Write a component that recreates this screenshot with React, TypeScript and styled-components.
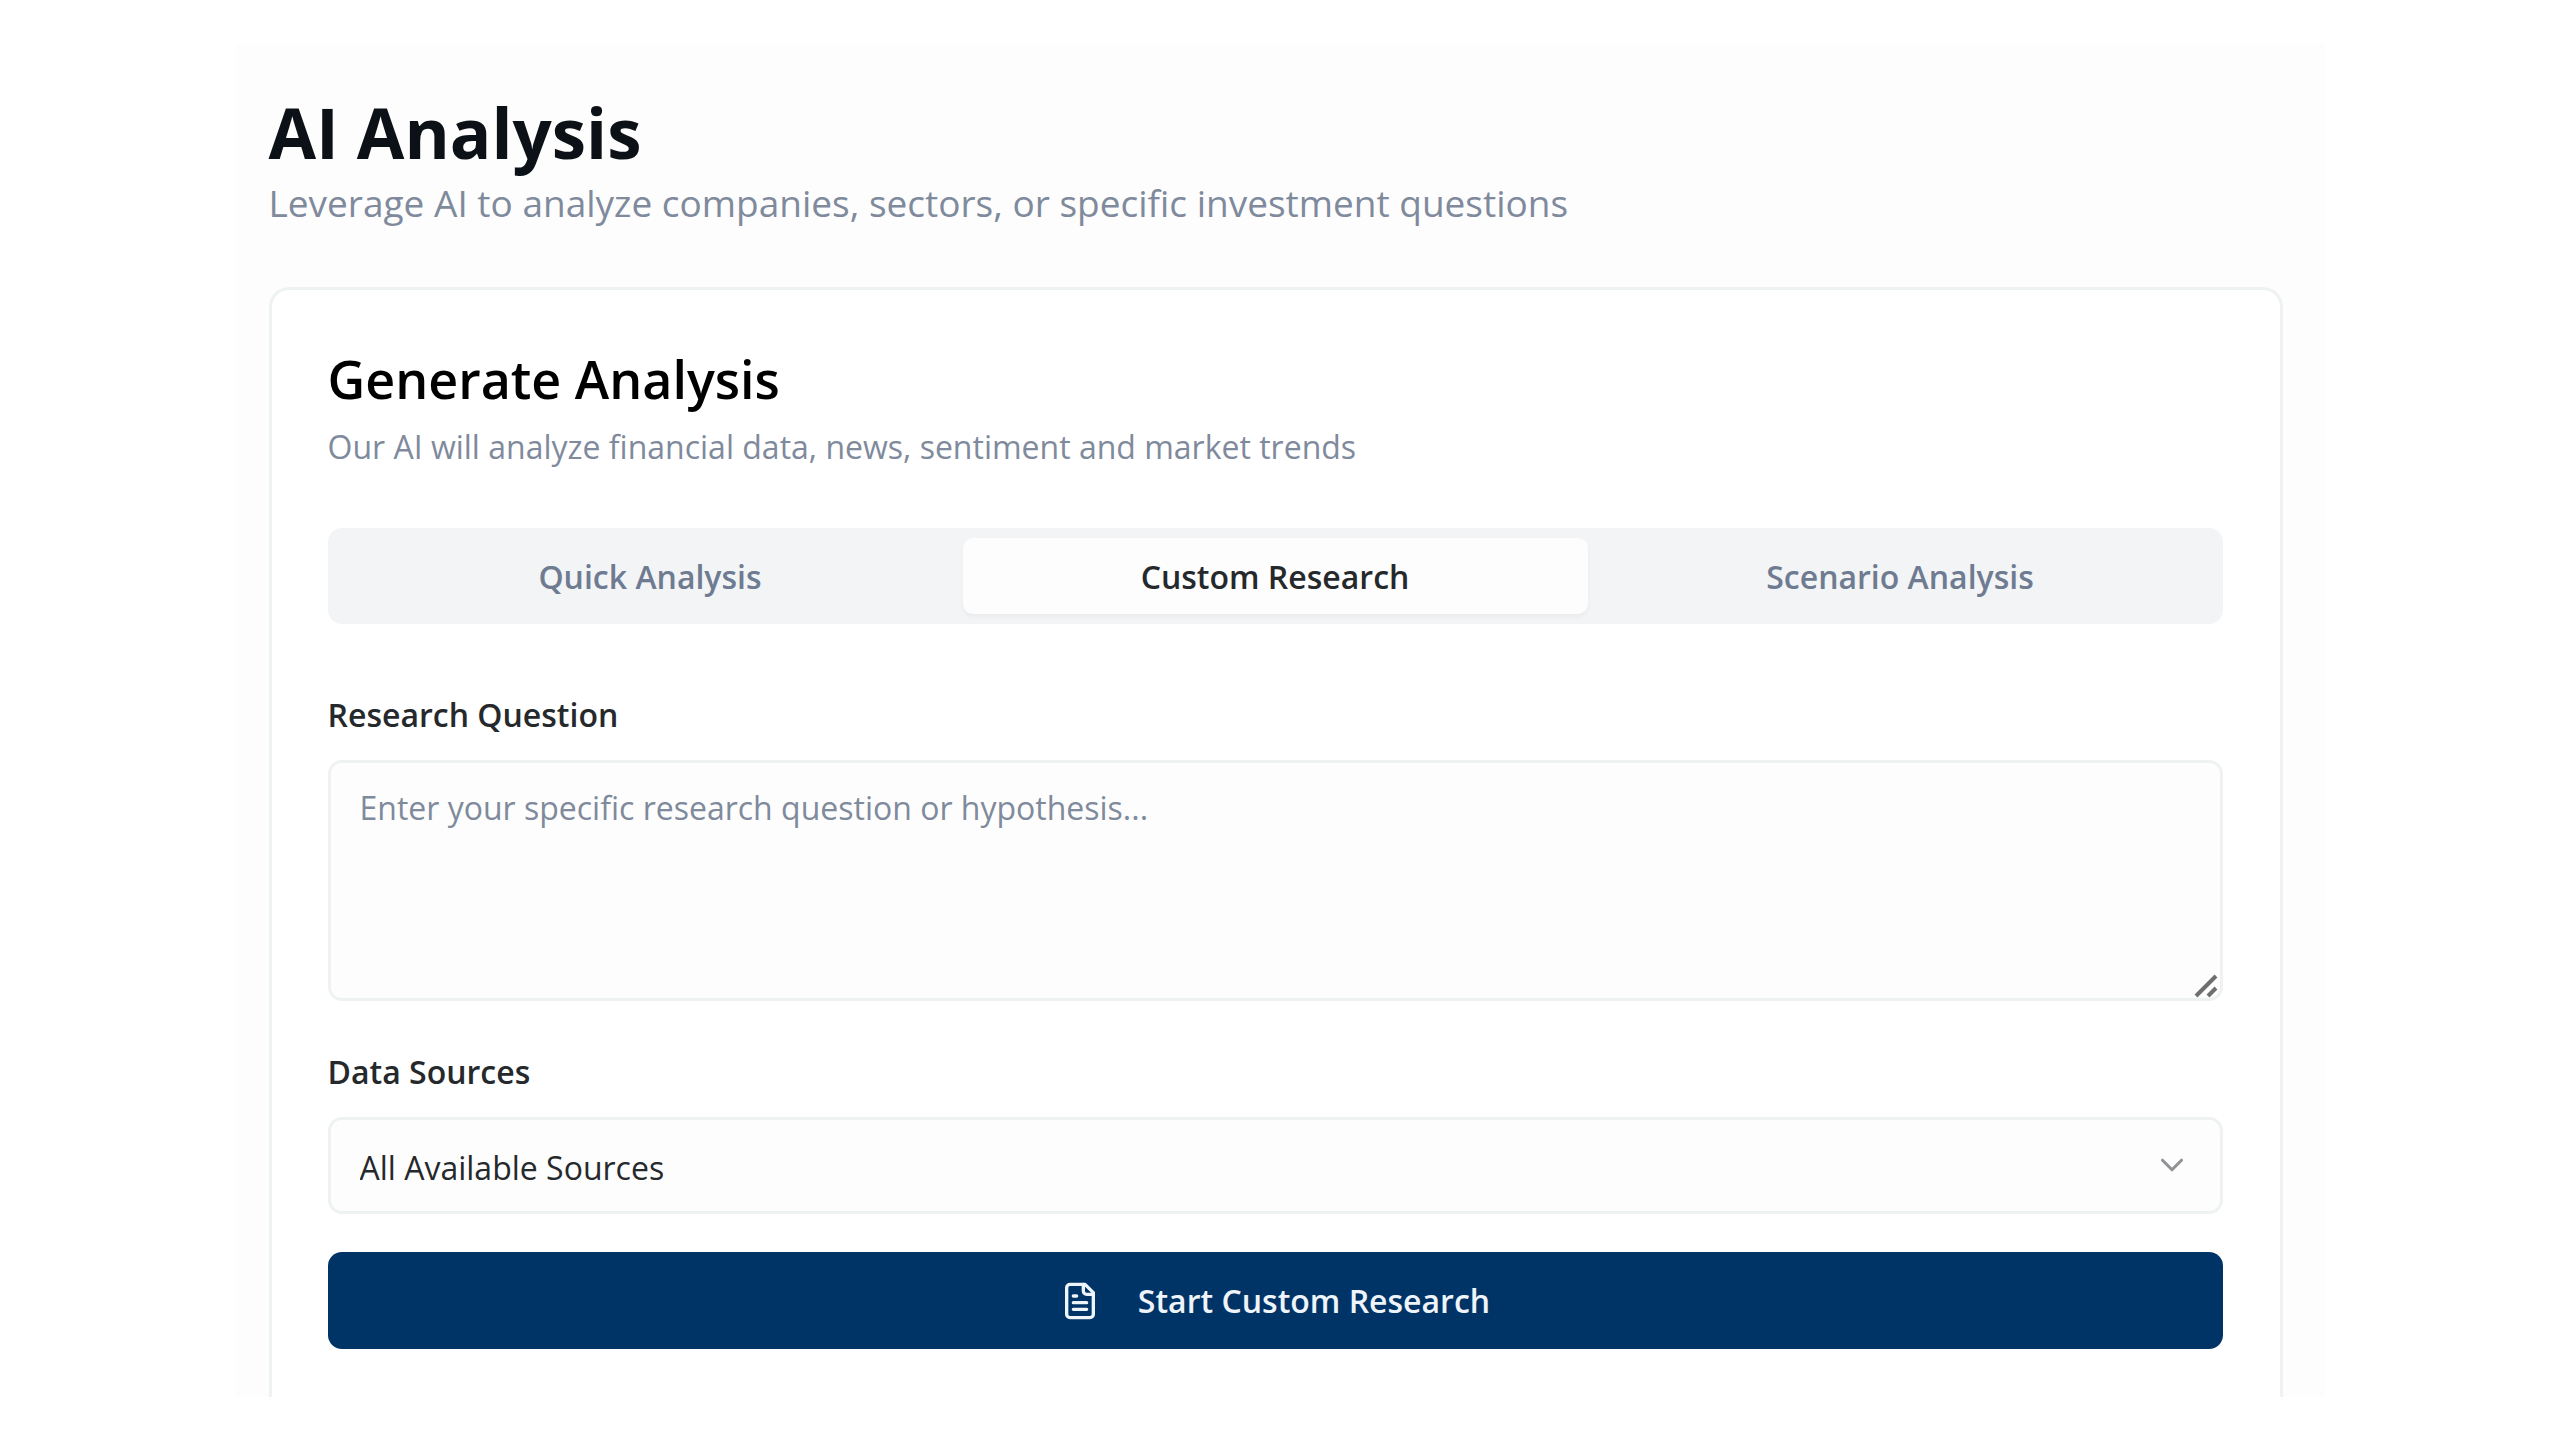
import React, { useState } from "react";
import styled, { createGlobalStyle } from "styled-components";

const color = {
  page: "#ffffff",
  panel: "#fdfdfd",
  card: "#ffffff",
  line: "#eef2f3",
  muted: "#f2f4f6",
  ink: "#0b1116",
  text: "#26292c",
  soft: "#7f8a9c",
  tab: "#6e7b91",
  navy: "#003366",
};

const GlobalStyle = createGlobalStyle`
  *, *::before, *::after { box-sizing: border-box; }
  body {
    margin: 0;
    background: ${color.page};
    color: ${color.ink};
    font-family: "Open Sans", "Noto Sans", sans-serif;
  }
  h1, h2, p { margin: 0; }
  button, select, textarea { font: inherit; }
`;

const Page = styled.div`
  padding: 44px 32px;
`;

const Panel = styled.main`
  max-width: 2089px;
  margin: 0 auto;
  padding: 46px 42px 0 33px;
  background: ${color.panel};
`;

const PageTitle = styled.h1`
  font-size: 69px;
  line-height: 84px;
  font-weight: 700;
`;

const PageIntro = styled.p`
  font-size: 37px;
  line-height: 58px;
  color: ${color.soft};
`;

const Card = styled.section`
  margin-top: 55px;
  padding: 60px 57px 48px 56px;
  border: 3px solid ${color.line};
  border-bottom: 0;
  border-radius: 20px 20px 0 0;
  background: ${color.card};
`;

const CardTitle = styled.h2`
  font-size: 52px;
  line-height: 58px;
  font-weight: 600;
  color: #000000;
`;

const CardIntro = styled.p`
  margin-top: 15px;
  font-size: 32px;
  line-height: 48px;
  color: ${color.soft};
`;

const TabList = styled.div`
  display: grid;
  grid-template-columns: repeat(3, 1fr);
  height: 96px;
  margin-top: 57px;
  padding: 10px;
  border-radius: 14px;
  background: ${color.muted};
`;

const Tab = styled.button<{ $active: boolean }>`
  border: 0;
  border-radius: 10px;
  padding: 2px 0 0;
  font-size: 32px;
  line-height: 48px;
  font-weight: 600;
  cursor: pointer;
  color: ${(p) => (p.$active ? color.text : color.tab)};
  background: ${(p) => (p.$active ? color.panel : "transparent")};
  box-shadow: ${(p) => (p.$active ? "0 3px 5px rgba(0, 0, 0, 0.04)" : "none")};
`;

const Form = styled.form`
  display: flex;
  flex-direction: column;
  margin-top: 74px;
`;

const Field = styled.div`
  display: flex;
  flex-direction: column;
  gap: 28px;
  & + & {
    margin-top: 54px;
  }
`;

const Label = styled.label`
  font-size: 32px;
  line-height: 34px;
  font-weight: 600;
  color: ${color.text};
`;

const ControlWrap = styled.div`
  position: relative;
  display: flex;
`;

const QuestionBox = styled.textarea`
  width: 100%;
  height: 241px;
  padding: 21px 29px;
  border: 3px solid ${color.line};
  border-radius: 14px;
  background: ${color.panel};
  color: ${color.text};
  font-size: 32px;
  line-height: 48px;
  resize: vertical;
  &::placeholder {
    color: ${color.soft};
    opacity: 1;
  }
  &::-webkit-resizer {
    background: transparent;
  }
`;

const Grip = styled.svg`
  position: absolute;
  right: 5px;
  bottom: 3px;
  width: 24px;
  height: 24px;
  pointer-events: none;
`;

const SourceSelect = styled.select`
  appearance: none;
  width: 100%;
  height: 97px;
  padding: 4px 29px 0;
  border: 3px solid ${color.line};
  border-radius: 14px;
  background: ${color.panel};
  color: ${color.text};
  font-size: 32px;
  line-height: 48px;
`;

const Chevron = styled.svg`
  position: absolute;
  right: 32px;
  top: 29px;
  width: 38px;
  height: 38px;
  pointer-events: none;
`;

const StartButton = styled.button`
  display: flex;
  align-items: center;
  justify-content: center;
  gap: 38px;
  height: 97px;
  margin-top: 38px;
  padding: 0;
  border: 0;
  border-radius: 14px;
  background: ${color.navy};
  color: #eef4fa;
  font-size: 32px;
  line-height: 48px;
  font-weight: 600;
  cursor: pointer;
`;

const DocIcon = styled.svg`
  width: 40px;
  height: 40px;
`;

const tabs = ["Quick Analysis", "Custom Research", "Scenario Analysis"];

export default function App() {
  const [active, setActive] = useState("Custom Research");

  return (
    <>
      <GlobalStyle />
      <Page>
        <Panel>
          <PageTitle>AI Analysis</PageTitle>
          <PageIntro>
            Leverage AI to analyze companies, sectors, or specific investment questions
          </PageIntro>
          <Card>
            <CardTitle>Generate Analysis</CardTitle>
            <CardIntro>
              Our AI will analyze financial data, news, sentiment and market trends
            </CardIntro>
            <TabList role="tablist">
              {tabs.map((name) => (
                <Tab
                  key={name}
                  type="button"
                  role="tab"
                  aria-selected={name === active}
                  $active={name === active}
                  onClick={() => setActive(name)}
                >
                  {name}
                </Tab>
              ))}
            </TabList>
            <Form onSubmit={(e) => e.preventDefault()}>
              <Field>
                <Label htmlFor="question">Research Question</Label>
                <ControlWrap>
                  <QuestionBox
                    id="question"
                    placeholder="Enter your specific research question or hypothesis..."
                  />
                  <Grip viewBox="0 0 24 24" aria-hidden="true">
                    <path
                      d="M2 22 22 2M14 22l8-8"
                      fill="none"
                      stroke="#6f6f6f"
                      strokeWidth="4"
                    />
                  </Grip>
                </ControlWrap>
              </Field>
              <Field>
                <Label htmlFor="sources">Data Sources</Label>
                <ControlWrap>
                  <SourceSelect id="sources">
                    <option>All Available Sources</option>
                  </SourceSelect>
                  <Chevron viewBox="0 0 24 24" aria-hidden="true">
                    <path
                      d="m6 9 6 6 6-6"
                      fill="none"
                      stroke="#919496"
                      strokeWidth="2"
                      strokeLinecap="round"
                      strokeLinejoin="round"
                    />
                  </Chevron>
                </ControlWrap>
              </Field>
              <StartButton type="submit">
                <DocIcon
                  viewBox="0 0 24 24"
                  fill="none"
                  stroke="currentColor"
                  strokeWidth="2"
                  strokeLinecap="round"
                  strokeLinejoin="round"
                  aria-hidden="true"
                >
                  <path d="M15 2H6a2 2 0 0 0-2 2v16a2 2 0 0 0 2 2h12a2 2 0 0 0 2-2V7Z" />
                  <path d="M14 2v4a2 2 0 0 0 2 2h4" />
                  <path d="M10 9H8M16 13H8M16 17H8" />
                </DocIcon>
                Start Custom Research
              </StartButton>
            </Form>
          </Card>
        </Panel>
      </Page>
    </>
  );
}
